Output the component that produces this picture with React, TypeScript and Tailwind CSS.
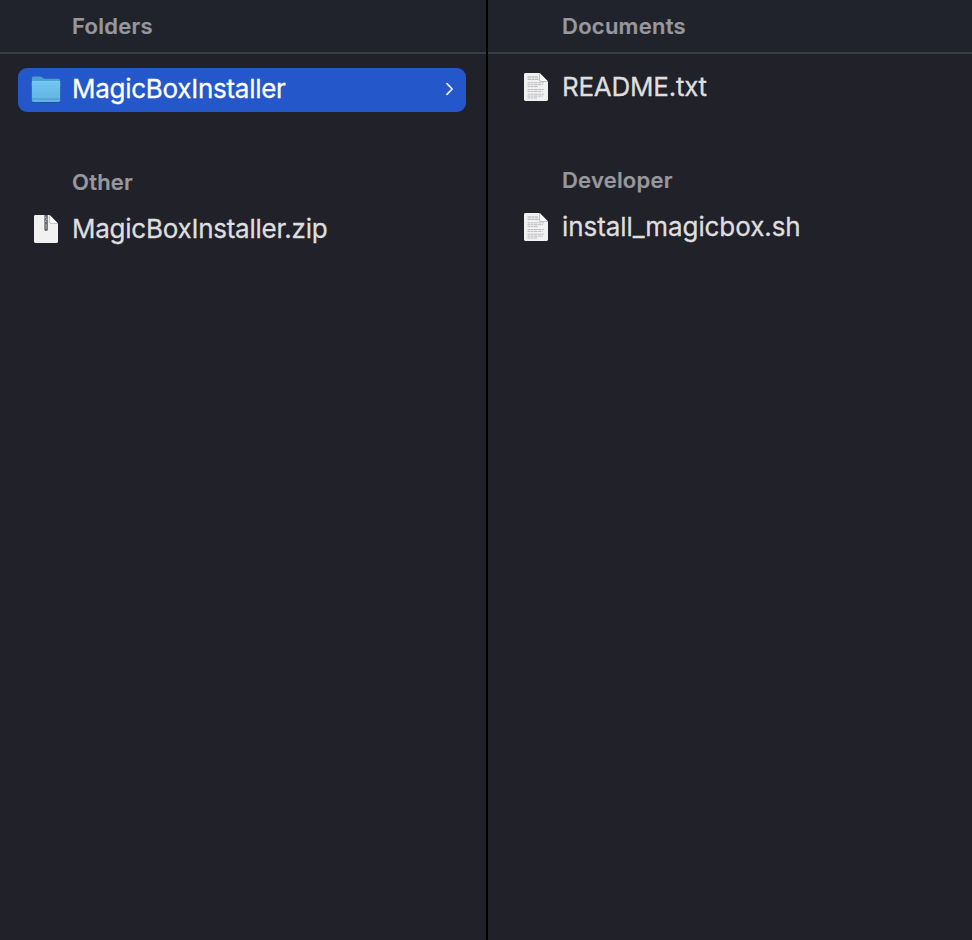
import type { ReactNode } from "react";

function FolderIcon() {
  return (
    <svg width="32" height="32" viewBox="0 0 32 32">
      <defs>
        <linearGradient id="folder" x1="0" y1="0" x2="0" y2="1">
          <stop offset="0" stopColor="#72c5ef" />
          <stop offset="1" stopColor="#5fb4e3" />
        </linearGradient>
      </defs>
      <path d="M1.6 4.8Q1.6 3 3.4 3H10.5Q11.6 3 12.4 3.8L13.5 4.8Q14.2 5.3 15 5.3H28.8Q30.4 5.3 30.4 7V27Q30.4 29 28.4 29H3.6Q1.6 29 1.6 27Z" fill="#23509a" opacity="0.8" />
      <path d="M1.8 4Q1.8 2.4 3.6 2.4H10Q11.2 2.4 12 3.2L13 4.1Q13.7 4.8 14.8 4.8H28.4Q30.2 4.8 30.2 6.6V12H1.8Z" fill="#4a9fd2" />
      <path d="M1.8 8.6Q1.8 7.2 3.2 7.2H28.8Q30.2 7.2 30.2 8.6V26.2Q30.2 27.9 28.5 27.9H3.5Q1.8 27.9 1.8 26.2Z" fill="url(#folder)" />
      <path d="M2.3 7.6H29.7" stroke="#86cff2" strokeWidth="0.8" />
      <path d="M2 25H30" stroke="#4490c2" strokeWidth="0.8" />
    </svg>
  );
}

function ZipIcon() {
  return (
    <svg width="32" height="32" viewBox="0 0 32 32">
      <path d="M5.4 2H19.6L28 10.4V28.6Q28 30 26.6 30H5.4Q4 30 4 28.6V3.4Q4 2 5.4 2Z" fill="#f1f1f2" />
      <path d="M19.6 2V9Q19.6 10.4 21 10.4H28Z" fill="#ffffff" />
      <path d="M19.6 2V9Q19.6 10.4 21 10.4H28" fill="none" stroke="#b4b4b8" strokeWidth="0.8" />
      <path d="M14.3 2H17.9V16.4Q17.9 18 16.1 18Q14.3 18 14.3 16.4Z" fill="#6c6d72" />
      <path d="M15 4.3H16.4M16 6.3H17.3M15 8.3H16.4" stroke="#c9c9cc" strokeWidth="0.9" />
      <path d="M16.1 11V15.5" stroke="#a0a1a6" strokeWidth="1.1" />
    </svg>
  );
}

function TextIcon() {
  return (
    <svg width="32" height="32" viewBox="0 0 32 32">
      <path d="M5.4 2H19.6L28 10.4V28.6Q28 30 26.6 30H5.4Q4 30 4 28.6V3.4Q4 2 5.4 2Z" fill="#f1f1f2" />
      <path d="M7.5 6H18M7.5 8.2H18.5" stroke="#a9a9ad" strokeWidth="1.1" strokeDasharray="4 .5 2.5 .5" />
      <path
        d="M7.5 11.8H24M7.5 13.7H23M7.5 15.6H18M7.5 18.5H24M7.5 20.4H22.5M7.5 23.2H24M7.5 25.1H23M7.5 27H17"
        stroke="#b5b5b9"
        strokeWidth="0.9"
        strokeDasharray="3 .6 2 .5 4 .6"
      />
      <path d="M19.6 2V9Q19.6 10.4 21 10.4H28Z" fill="#ffffff" />
      <path d="M19.6 2V9Q19.6 10.4 21 10.4H28" fill="none" stroke="#a9a9ad" strokeWidth="0.8" />
    </svg>
  );
}

function Header({ children }: { children: ReactNode }) {
  return (
    <div className="h-[54px] shrink-0 border-b-2 border-[#3b3c43] bg-[#20232b] pl-[72px] text-[22px] leading-[52px] font-semibold tracking-[0.26px] text-[#97989d] [-webkit-text-stroke:0.2px]">
      {children}
    </div>
  );
}

function SectionTitle({ children }: { children: ReactNode }) {
  return (
    <div className="h-11 pl-[72px] text-[22px] leading-[44px] font-semibold tracking-[0.22px] text-[#97989d] [-webkit-text-stroke:0.2px]">
      {children}
    </div>
  );
}

function Row({ icon, selected, children }: { icon: ReactNode; selected?: boolean; children: ReactNode }) {
  return (
    <div
      className={`mr-5 ml-[18px] flex h-11 items-center gap-[10px] rounded-[9px] pr-[10px] pl-3 text-[26px] [-webkit-text-stroke:0.3px] ${
        selected ? "bg-[#2457c9] leading-[42px] text-white" : "leading-[44px] text-[#dededf]"
      }`}
    >
      {icon}
      <span className="h-11 flex-1">{children}</span>
      {selected && (
        <svg className="mb-[2px]" width="12" height="16" viewBox="0 0 12 16" fill="none" stroke="#e8eefb" strokeWidth="1.8" strokeLinecap="round" strokeLinejoin="round">
          <path d="M3 2.6L8.2 8L3 13.4" />
        </svg>
      )}
    </div>
  );
}

export default function App() {
  return (
    <div className="flex h-[940px] w-[972px] overflow-hidden bg-[#21212a] font-['Inter','Liberation_Sans',sans-serif]">
      <section className="flex w-[486px] flex-col">
        <Header>Folders</Header>
        <div className="pt-[14px]">
          <Row icon={<FolderIcon />} selected>
            <span className="tracking-[-0.27px]">MagicBoxInstaller</span>
          </Row>
          <div className="pt-12 pb-[3px]">
            <SectionTitle>Other</SectionTitle>
          </div>
          <Row icon={<ZipIcon />}>
            <span className="tracking-[-0.25px]">MagicBoxInstaller.zip</span>
          </Row>
        </div>
      </section>
      <div className="w-[2px] bg-black" />
      <section className="flex w-[484px] flex-col">
        <Header>
          <span className="pl-[2px]">Documents</span>
        </Header>
        <div className="pt-[11px]">
          <div className="pl-[2px]">
            <Row icon={<TextIcon />}>
              <span className="tracking-[-0.25px]">README.txt</span>
            </Row>
            <div className="pt-[49px] pb-[3px]">
              <SectionTitle>Developer</SectionTitle>
            </div>
            <Row icon={<TextIcon />}>
              <span className="tracking-[-0.08px]">install_magicbox.sh</span>
            </Row>
          </div>
        </div>
      </section>
    </div>
  );
}
